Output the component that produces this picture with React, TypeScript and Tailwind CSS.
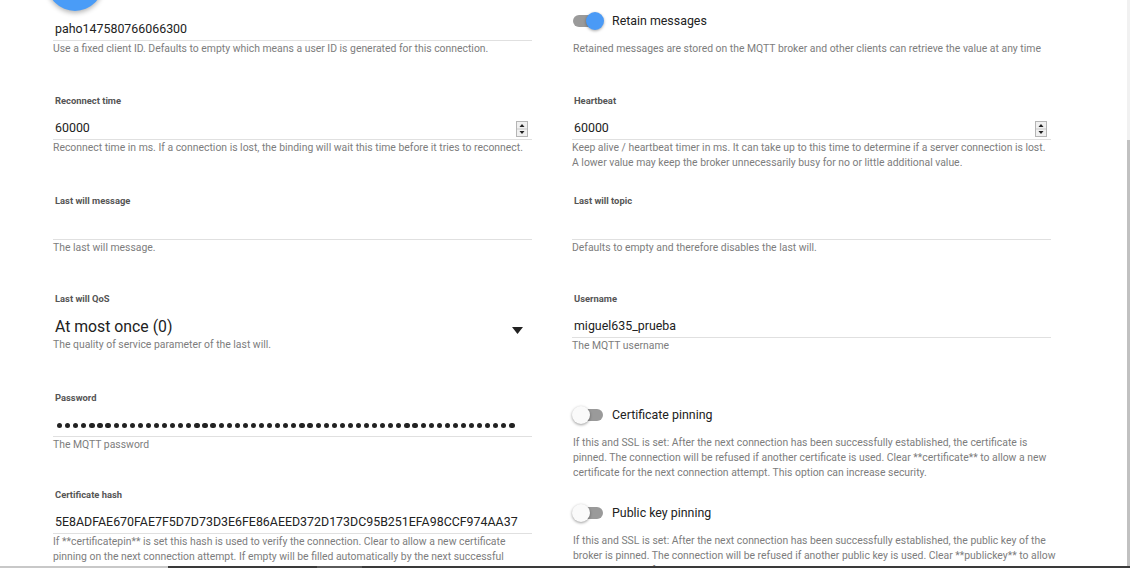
const label = "text-[9.4px] leading-[12px] font-bold text-[#555] pl-[2px] pt-[1px]";
const helper = "text-[10.4px] leading-[15px] text-[#7d7d7d] whitespace-nowrap";
const value = "text-[12.4px] text-[#222]";

function Spinner() {
  return (
    <svg width="12" height="16" viewBox="0 0 12 16" className="shrink-0 mb-[-1px]">
      <rect x="0.5" y="0.5" width="11" height="15" fill="#f0f0f0" stroke="#b5b5b5" />
      <line x1="1" y1="8" x2="11" y2="8" stroke="#c8c8c8" />
      <path d="M3.5 6 L6 3 L8.5 6 Z" fill="#222" />
      <path d="M3.5 10 L8.5 10 L6 13 Z" fill="#222" />
    </svg>
  );
}

function Toggle({ on }: { on: boolean }) {
  return (
    <div className="relative w-[32px] h-[20px] shrink-0">
      <div className="absolute left-[1px] top-[4px] w-[30px] h-[12px] rounded-full bg-[#9a9a9a]" />
      {on ? (
        <div className="absolute left-[14px] top-[1px] w-[18px] h-[18px] rounded-full bg-[#4a9af6] shadow-[0_1px_3px_rgba(0,0,0,0.35)]" />
      ) : (
        <div className="absolute left-0 top-[1px] w-[18px] h-[18px] rounded-full bg-[#fafafa] shadow-[0_1px_3px_rgba(0,0,0,0.4)]" />
      )}
    </div>
  );
}

function TextField({
  title,
  text,
  hint,
  spin,
}: {
  title?: string;
  text?: string;
  hint: React.ReactNode;
  spin?: boolean;
}) {
  return (
    <div className="flex flex-col">
      {title && <div className={label}>{title}</div>}
      <div className="h-[33px] flex items-center justify-between pt-[11px] pl-[2px] pr-[4px] border-b border-[#e0e0e0]">
        <span className={value}>{text}</span>
        {spin && <Spinner />}
      </div>
      <div className={helper}>{hint}</div>
    </div>
  );
}

function Switch({ on, title, hint, top }: { on: boolean; title: string; hint: React.ReactNode; top: string }) {
  return (
    <div className={`flex flex-col ${top}`}>
      <div className="flex items-center gap-[8px] h-[20px]">
        <Toggle on={on} />
        <span className="text-[12.4px] text-[#222]">{title}</span>
      </div>
      <div className={`${helper} mt-[10px] pl-[1px]`}>{hint}</div>
    </div>
  );
}

export default function App() {
  const dots = Array.from({ length: 57 });
  return (
    <div className="w-[1130px] h-[568px] flex flex-col overflow-hidden bg-white font-['Roboto',sans-serif]">
      <div className="flex flex-1 min-h-0">
        <div className="relative flex-1 overflow-hidden">
          {/* floating button, mostly scrolled out of view */}
          <div className="absolute left-[47px] top-[-45px] w-[56px] h-[56px] rounded-full bg-[#4a9cf7] shadow-[0_2px_5px_rgba(0,0,0,0.3)]" />

          <div className="grid grid-cols-[479px_479px] grid-rows-[94px_100px_98px_99px_97px_auto] gap-x-[40px] pl-[53px]">
            {/* row 1 */}
            <div className="mt-[8px]">
              <TextField
                text="paho147580766066300"
                hint="Use a fixed client ID. Defaults to empty which means a user ID is generated for this connection."
              />
            </div>
            <Switch
              on
              top="mt-[11px]"
              title="Retain messages"
              hint="Retained messages are stored on the MQTT broker and other clients can retrieve the value at any time"
            />

            {/* row 2 */}
            <TextField
              title="Reconnect time"
              text="60000"
              spin
              hint="Reconnect time in ms. If a connection is lost, the binding will wait this time before it tries to reconnect."
            />
            <TextField
              title="Heartbeat"
              text="60000"
              spin
              hint={
                <>
                  Keep alive / heartbeat timer in ms. It can take up to this time to determine if a server connection is lost.
                  <br />
                  A lower value may keep the broker unnecessarily busy for no or little additional value.
                </>
              }
            />

            {/* row 3 */}
            <TextField title="Last will message" text="" hint="The last will message." />
            <TextField title="Last will topic" text="" hint="Defaults to empty and therefore disables the last will." />

            {/* row 4 */}
            <div className="flex flex-col">
              <div className={label}>Last will QoS</div>
              <div className="h-[32px] flex items-end justify-between pl-[2px] pr-[9px]">
                <span className="text-[15.8px] leading-[20px] text-[#222]">At most once (0)</span>
                <svg width="11" height="7" viewBox="0 0 11 7" className="mb-[3px]">
                  <path d="M0 0 L11 0 L5.5 7 Z" fill="#222" />
                </svg>
              </div>
              <div className={helper}>The quality of service parameter of the last will.</div>
            </div>
            <TextField title="Username" text="miguel635_prueba" hint="The MQTT username" />

            {/* row 5 */}
            <div className="flex flex-col">
              <div className={label}>Password</div>
              <div className="h-[33px] flex items-center gap-[2.9px] pt-[11px] pl-[4px] border-b border-[#e0e0e0]">
                {dots.map((_, i) => (
                  <div key={i} className="w-[5.2px] h-[5.2px] rounded-full bg-[#222] shrink-0" />
                ))}
              </div>
              <div className={helper}>The MQTT password</div>
            </div>
            <Switch
              on={false}
              top="mt-[14px]"
              title="Certificate pinning"
              hint={
                <>
                  If this and SSL is set: After the next connection has been successfully established, the certificate is
                  <br />
                  pinned. The connection will be refused if another certificate is used. Clear **certificate** to allow a new
                  <br />
                  certificate for the next connection attempt. This option can increase security.
                </>
              }
            />

            {/* row 6 */}
            <TextField
              title="Certificate hash"
              text="5E8ADFAE670FAE7F5D7D73D3E6FE86AEED372D173DC95B251EFA98CCF974AA37"
              hint={
                <>
                  If **certificatepin** is set this hash is used to verify the connection. Clear to allow a new certificate
                  <br />
                  pinning on the next connection attempt. If empty will be filled automatically by the next successful
                  <br />
                  connection.
                </>
              }
            />
            <Switch
              on={false}
              top="mt-[15px]"
              title="Public key pinning"
              hint={
                <>
                  If this and SSL is set: After the next connection has been successfully established, the public key of the
                  <br />
                  broker is pinned. The connection will be refused if another public key is used. Clear **publickey** to allow
                  <br />
                  a new public key for the next connection attempt. This option can increase security.
                </>
              }
            />
          </div>
        </div>

        {/* scrollbar */}
        <div className="w-[3px] flex flex-col bg-[#f1f1f1]">
          <div className="h-[140px]" />
          <div className="flex-1 bg-[#c1c1c1]" />
        </div>
      </div>

      {/* bottom strip */}
      <div className="h-[2px] flex">
        <div className="w-[168px] bg-[#c8c8c8]" />
        <div className="w-[149px] bg-[#3a3a3a]" />
        <div className="w-[45px] bg-[#5a5a5a]" />
        <div className="flex-1 bg-[#3a3a3a]" />
      </div>
    </div>
  );
}
